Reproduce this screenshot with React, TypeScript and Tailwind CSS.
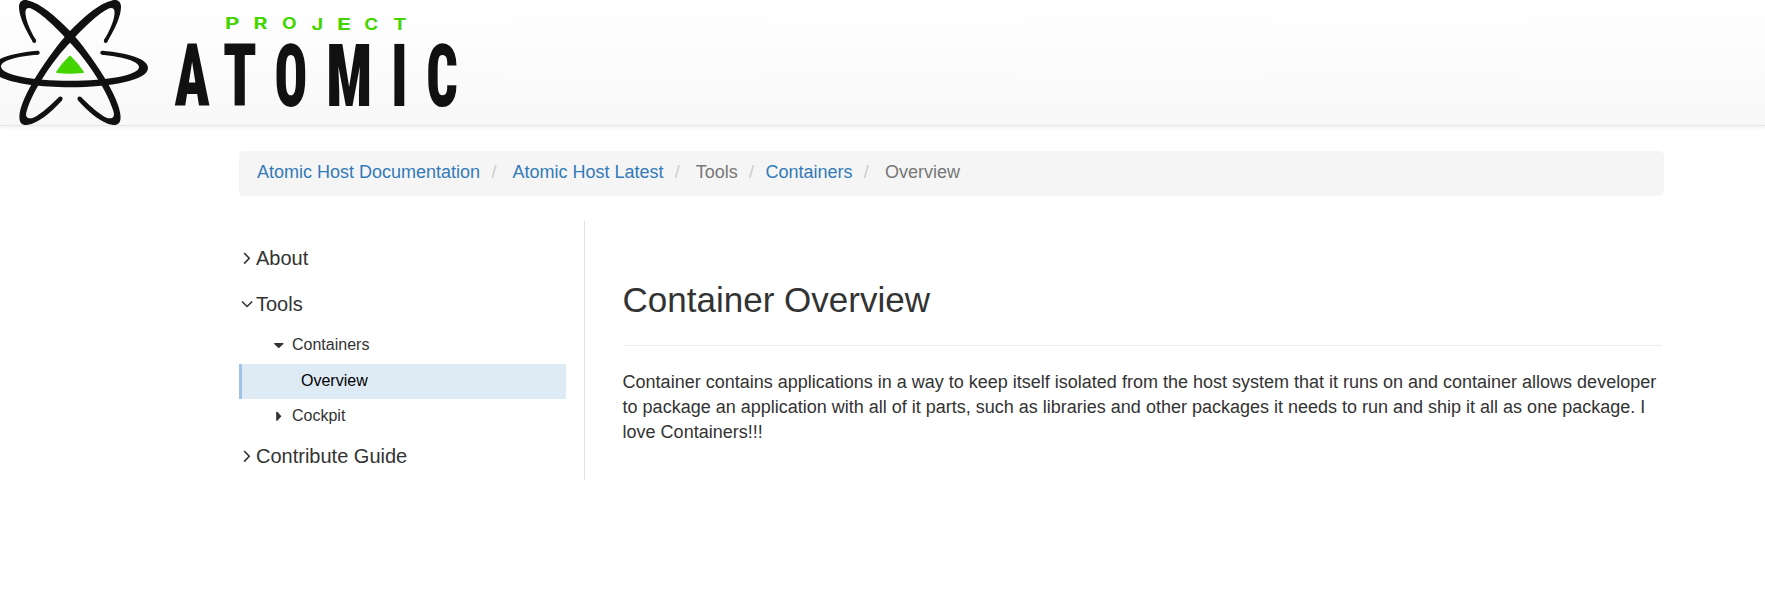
import React from 'react';

// x is the centre of each letter, sx its horizontal scale
const wordmark = [
  { ch: 'A', x: 192.1, sx: 0.665 },
  { ch: 'T', x: 240, sx: 0.695 },
  { ch: 'O', x: 291, sx: 0.62 },
  { ch: 'M', x: 349.3, sx: 0.69 },
  { ch: 'I', x: 399.3, sx: 0.68 },
  { ch: 'C', x: 442, sx: 0.63 },
];

const tagline = [
  { ch: 'P', x: 232.3, y: 28.8, sx: 1.45 },
  { ch: 'R', x: 260.4, y: 29, sx: 1.38 },
  { ch: 'O', x: 289.3, y: 29.3, sx: 1.23 },
  { ch: 'J', x: 317.3, y: 29.5, sx: 1.3 },
  { ch: 'E', x: 344, y: 29.8, sx: 1.5 },
  { ch: 'C', x: 371.2, y: 30, sx: 1.22 },
  { ch: 'T', x: 399.8, y: 30.2, sx: 1.28 },
];

const orbit =
  'M32.6,41.5 C25,29 19,16 19,7 C19,1 23,-1 28,0.5 C40,3 56,16.5 70.5,31.5 C91,54 120.6,98 120.6,117 C120.6,124 117,125.6 112,124.8 C103,123.5 90,114 78,100.5 L81,97 C92,108 104,118 109,118.3 C114,118.3 115,115.5 113,110 C107,90 86,58.5 69,41.7 C52,22.5 35,8.5 29,8 C25,8 25,12 26,17 C27,23 31,32 36,40 Z';

function Orbit() {
  return (
    <>
      <path d={orbit} />
      <circle cx="34.3" cy="41" r="1.9" />
      <circle cx="79.5" cy="98.7" r="2.1" />
    </>
  );
}

function Logo() {
  return (
    <svg width="460" height="125" viewBox="0 0 460 125" className="block overflow-visible" fill="#111111">
      <Orbit />
      <g transform="translate(140 0) scale(-1 1)">
        <Orbit />
      </g>
      <path d="M102,50.8 C130,53.3 148,59.3 148,68 C148,80.5 110,87.3 70,87.3 C30,87.3 -8,80.5 -8,68 C-8,59.3 10,53.3 38,50.8 L38,54.8 C15,56.5 1,61 1,66.5 C1,75 32,80.8 70,80.8 C108,80.8 139,75 139,67 C139,62 125,57 102,54.8 Z" />
      <circle cx="102.3" cy="52.8" r="2" />
      <circle cx="37.7" cy="52.8" r="2" />
      <path d="M69.3,56 Q70,55.3 70.7,56 Q78.5,63.5 83.8,71.8 Q84.2,72.8 83,73 Q70,74.4 57,73 Q55.8,72.8 56.2,71.8 Q61.5,63.5 69.3,56 Z" fill="#44d500" />
      <g fill="#44d500" textAnchor="middle" className="font-[Inter,sans-serif] text-[15.4px] font-bold">
        {tagline.map((g, i) => (
          <text key={i} transform={`translate(${g.x} ${g.y}) scale(${g.sx} 1)`}>
            {g.ch}
          </text>
        ))}
      </g>
      <g textAnchor="middle" className="font-[Roboto,sans-serif] text-[87.6px] font-black [font-stretch:75%]">
        {wordmark.map((g) => (
          <text key={g.ch} transform={`translate(${g.x} 106.2) scale(${g.sx} 1)`}>
            {g.ch}
          </text>
        ))}
      </g>
    </svg>
  );
}

function Chevron({ open = false }: { open?: boolean }) {
  return (
    <svg width="17" height="20" viewBox="0 0 17 20" fill="none" stroke="#333" strokeWidth="1.6" className="shrink-0">
      <path d={open ? 'M3 7.5 L8.1 12.5 L13.2 7.5' : 'M5.2 5 L10.2 10.3 L5.2 15.6'} />
    </svg>
  );
}

function Caret({ open = false }: { open?: boolean }) {
  return (
    <svg width="18" height="16" viewBox="0 0 18 16" fill="#333" className="shrink-0">
      <path d={open ? 'M0.2 6 H9.4 V7 L4.8 11.3 L0.2 7 Z' : 'M2.2 3.8 H3.4 L7.4 8.3 L3.4 12.8 H2.2 Z'} />
    </svg>
  );
}

function Section({ label, open }: { label: string; open?: boolean }) {
  return (
    <div className="flex h-[46px] items-center text-[20px]">
      <Chevron open={open} />
      <span>{label}</span>
    </div>
  );
}

export default function App() {
  return (
    <div className="min-h-[599px] bg-white font-['Liberation_Sans',Arial,sans-serif] text-[#333]">
      <header className="h-[126px] border-b border-[#e5e5e5] bg-gradient-to-b from-white to-[#f8f8f8] shadow-[0_1px_5px_rgba(0,0,0,0.08)]">
        <Logo />
      </header>
      <div className="ml-[239px] w-[1425px] pt-[25px]">
        <nav className="flex h-[45px] items-center rounded-[5px] bg-[#f5f5f5] pb-[3px] pl-[18px] text-[18px] whitespace-nowrap text-[#777]">
          <a className="text-[#337ab7]">Atomic Host Documentation</a>
          <span className="mr-[16px] ml-[11.3px] text-[#ccc]">/</span>
          <a className="text-[#337ab7]">Atomic Host Latest</a>
          <span className="mr-[16px] ml-[11.3px] text-[#ccc]">/</span>
          <span>Tools</span>
          <span className="mr-[11.4px] ml-[11.3px] text-[#ccc]">/</span>
          <a className="text-[#337ab7]">Containers</a>
          <span className="mr-[16.2px] ml-[11.3px] text-[#ccc]">/</span>
          <span>Overview</span>
        </nav>
        <div className="mt-[25px] flex">
          <aside className="h-[259px] w-[346px] border-r border-[#e2e2e2] pt-[14px] pr-[18px]">
            <Section label="About" />
            <Section label="Tools" open />
            <div className="flex h-[37px] items-center pb-[2px] pl-[35px] text-[16px]">
              <Caret open />
              <span>Containers</span>
            </div>
            <div className="flex h-[35px] items-center border-l-[3px] border-[#9fc2e7] bg-[#deeaf4] pb-[2px] pl-[59px] text-[16px] text-black">
              Overview
            </div>
            <div className="flex h-[34px] items-center pb-[1px] pl-[35px] text-[16px]">
              <Caret />
              <span>Cockpit</span>
            </div>
            <Section label="Contribute Guide" />
          </aside>
          <main className="ml-[37.6px] w-[1039px] pt-[54px]">
            <h1 className="h-[71px] border-b border-[#eee] text-[35px] leading-[50px]">Container Overview</h1>
            <p className="mt-[24px] text-[18px] leading-[25px]">
              Container contains applications in a way to keep itself isolated from the host system that it runs on and
              container allows developer to package an application with all of it parts, such as libraries and other
              packages it needs to run and ship it all as one package. I love Containers!!!
            </p>
          </main>
        </div>
      </div>
    </div>
  );
}
